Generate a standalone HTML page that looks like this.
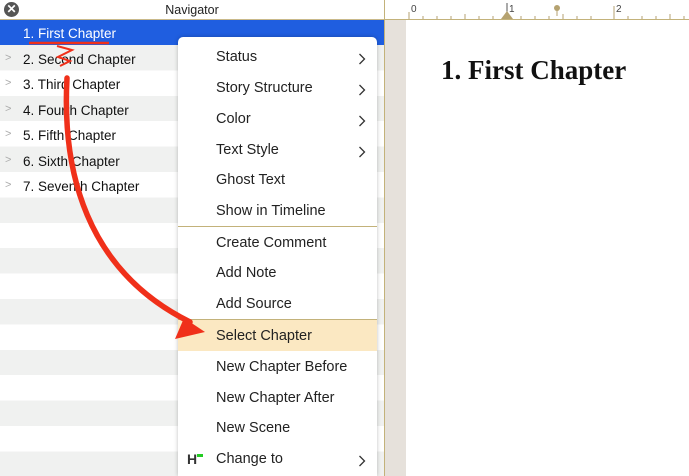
<!DOCTYPE html><html><head><style>
html{overflow:hidden;height:476px}
body{margin:0;width:689px;height:476px;overflow:hidden;position:relative;font-family:"Liberation Sans",sans-serif;background:#fff}
.nav{position:absolute;left:0;top:0;width:384px;height:476px;background:repeating-linear-gradient(#f0f1f0 0 25.4px,#fff 25.4px 50.8px);background-position:0 45px}
.hdr{position:absolute;left:0;top:0;width:384px;height:19px;background:#fff;border-bottom:1px solid #c9b98a;text-align:center;font-size:12.5px;line-height:20px;color:#222}
.x{position:absolute;left:4px;top:2px;width:15px;height:15px;border-radius:50%;background:#555;color:#fff;font-size:12px;line-height:15px;font-weight:bold}
.sel{position:absolute;left:0;top:20px;width:384px;height:25px;background:#1f5ee0}
.row{position:absolute;left:23px;font-size:13.5px;color:#111}
.ch{position:absolute;left:5px;color:#aaa;font-size:11px}
.vline{position:absolute;left:384px;top:0;width:1px;height:476px;background:#c3b27a}
.strip{position:absolute;left:385px;top:20px;width:21px;height:456px;background:#e6e1db}
.ruler{position:absolute;left:385px;top:0;width:304px;height:19px;background:#fff;border-bottom:1px solid #c3b27a}
.menu{position:absolute;left:178px;top:37px;width:199px;height:439px;background:#fff;border-radius:5px 5px 0 0;box-shadow:0 0 4px rgba(0,0,0,.25)}
.mi{position:absolute;left:38px;font-size:14.5px;color:#222}
.ar{position:absolute;left:180px;width:8px;height:12px}
.sep{position:absolute;left:0;width:199px;height:1px;background:#c3b27a}
</style></head><body>
<div class="nav"></div>
<div class="sel"></div>
<div class="hdr"><div class="x">✕</div>Navigator</div>
<div class="row" style="top:26px;color:#fff">1. First Chapter</div>
<div class="ch" style="top:52px">&gt;</div><div class="row" style="top:52px">2. Second Chapter</div>
<div class="ch" style="top:77px">&gt;</div><div class="row" style="top:77px">3. Third Chapter</div>
<div class="ch" style="top:103px">&gt;</div><div class="row" style="top:103px">4. Fourth Chapter</div>
<div class="ch" style="top:128px">&gt;</div><div class="row" style="top:128px">5. Fifth Chapter</div>
<div class="ch" style="top:154px">&gt;</div><div class="row" style="top:154px">6. Sixth Chapter</div>
<div class="ch" style="top:179px">&gt;</div><div class="row" style="top:179px">7. Seventh Chapter</div>
<div class="vline"></div><div class="strip"></div>
<div class="ruler"><svg width="304" height="20" style="position:absolute;left:0;top:0">
<g stroke="#b5a270" stroke-width="1">
<line x1="24" y1="12" x2="24" y2="19"/><line x1="38" y1="16" x2="38" y2="19"/><line x1="52" y1="16" x2="52" y2="19"/><line x1="66" y1="16" x2="66" y2="19"/><line x1="80" y1="14" x2="80" y2="19"/><line x1="94" y1="16" x2="94" y2="19"/><line x1="108" y1="16" x2="108" y2="19"/><line x1="122" y1="3" x2="122" y2="19" stroke="#555"/><line x1="136" y1="16" x2="136" y2="19"/><line x1="150" y1="16" x2="150" y2="19"/><line x1="164" y1="16" x2="164" y2="19"/><line x1="178" y1="14" x2="178" y2="19"/><line x1="192" y1="16" x2="192" y2="19"/><line x1="206" y1="16" x2="206" y2="19"/><line x1="229" y1="6" x2="229" y2="19"/><line x1="243" y1="16" x2="243" y2="19"/><line x1="257" y1="16" x2="257" y2="19"/><line x1="271" y1="16" x2="271" y2="19"/><line x1="285" y1="14" x2="285" y2="19"/><line x1="299" y1="16" x2="299" y2="19"/><line x1="172" y1="8" x2="172" y2="16"/></g>
<circle cx="172" cy="8" r="3" fill="#b5a270"/><path d="M116 19 L122 11 L128 19Z" fill="#b5a270"/>
<text x="26" y="12" font-size="10" fill="#444" font-family="Liberation Sans">0</text><text x="124" y="12" font-size="10" fill="#444" font-family="Liberation Sans">1</text><text x="231" y="12" font-size="10" fill="#444" font-family="Liberation Sans">2</text></svg></div>
<div style="position:absolute;left:441px;top:55px;font-family:'Liberation Serif',serif;font-weight:bold;font-size:27px;color:#111">1. First Chapter</div>
<div class="menu">
<div class="mi" style="top:12px">Status</div><svg class="ar" style="top:16px"><path d="M1.5 1 L6.5 6 L1.5 11" stroke="#333" stroke-width="1.3" fill="none"/></svg>
<div class="mi" style="top:43px">Story Structure</div><svg class="ar" style="top:47px"><path d="M1.5 1 L6.5 6 L1.5 11" stroke="#333" stroke-width="1.3" fill="none"/></svg>
<div class="mi" style="top:74px">Color</div><svg class="ar" style="top:78px"><path d="M1.5 1 L6.5 6 L1.5 11" stroke="#333" stroke-width="1.3" fill="none"/></svg>
<div class="mi" style="top:105px">Text Style</div><svg class="ar" style="top:109px"><path d="M1.5 1 L6.5 6 L1.5 11" stroke="#333" stroke-width="1.3" fill="none"/></svg>
<div class="mi" style="top:135px">Ghost Text</div>
<div class="mi" style="top:166px">Show in Timeline</div>
<div class="sep" style="top:189px"></div>
<div class="mi" style="top:198px">Create Comment</div>
<div class="mi" style="top:228px">Add Note</div>
<div class="mi" style="top:259px">Add Source</div>
<div class="sep" style="top:282px"></div>
<div style="position:absolute;left:0;top:283px;width:199px;height:31px;background:#fbe8c2"></div>
<div class="mi" style="top:291px">Select Chapter</div>
<div class="mi" style="top:322px">New Chapter Before</div>
<div class="mi" style="top:353px">New Chapter After</div>
<div class="mi" style="top:383px">New Scene</div>
<div style="position:absolute;left:9px;top:414px;font-weight:bold;font-size:14px;color:#333">H<span style="display:inline-block;width:6px;height:3px;background:#2c2;vertical-align:top;margin-top:3px"></span></div>
<div class="mi" style="top:414px">Change to</div><svg class="ar" style="top:418px"><path d="M1.5 1 L6.5 6 L1.5 11" stroke="#333" stroke-width="1.3" fill="none"/></svg>
</div>
<svg width="689" height="476" style="position:absolute;left:0;top:0" fill="none">
<path d="M29 43 L109 43" stroke="#f0301a" stroke-width="2.5"/>
<path d="M57 46 L72 50 L58 57 L70 61 L60 66" stroke="#f0301a" stroke-width="2"/>
<path d="M67 78 C62 170 85 270 190 322" stroke="#f0301a" stroke-width="5.5" stroke-linecap="round"/>
<path d="M175 339 L184 318 L205 332Z" fill="#f0301a"/>
</svg>
</body></html>
